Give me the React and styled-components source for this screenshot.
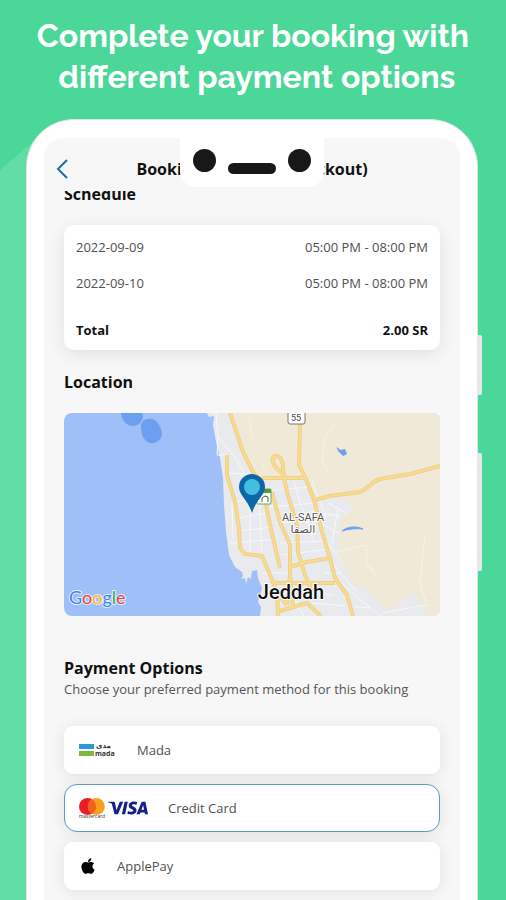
import React, { useState } from "react"
import styled, { createGlobalStyle } from "styled-components"
import { FaApple } from "react-icons/fa"
import { SiVisa } from "react-icons/si"

const GlobalStyle = createGlobalStyle`
  * {
    box-sizing: border-box;
  }
  body {
    margin: 0;
    font-family: "Open Sans", "Noto Sans", sans-serif;
    color: #111;
  }
`

const Page = styled.main`
  min-height: 100vh;
  display: flex;
  flex-direction: column;
  overflow: hidden;
  background: linear-gradient(to bottom right, #4bd798 50%, #62dda6 50%) 0 136px /
      40px 34px no-repeat,
    linear-gradient(#62dda6, #62dda6) 0 170px / 40px 100% no-repeat, #4bd798;
`

const Headline = styled.h1`
  margin: 0;
  padding: 15px 0 22px;
  font-family: Raleway, Lato, sans-serif;
  font-size: 32px;
  font-weight: 700;
  line-height: 41px;
  text-align: center;
  color: #fff;
`

const Phone = styled.div`
  position: relative;
  flex: 1;
  display: flex;
  margin: 0 28px 0 26px;
  padding: 18px 17px 0;
  border: 1px solid #d9e8e1;
  border-bottom: 0;
  border-radius: 48px 48px 0 0;
  background: #fff;
`

const SideButton = styled.span`
  position: absolute;
  left: 100%;
  top: ${({ $top }) => $top}px;
  width: 5px;
  height: ${({ $height }) => $height}px;
  border-radius: 0 2px 2px 0;
  background: #e6e9ea;
`

const Notch = styled.div`
  position: absolute;
  top: 18px;
  left: 50%;
  transform: translateX(-50%);
  width: 144px;
  height: 49px;
  padding: 11px 13px 0;
  display: flex;
  justify-content: space-between;
  border-radius: 0 0 16px 16px;
  background: #fff;
`

const Camera = styled.span`
  width: 23px;
  height: 23px;
  border-radius: 50%;
  background: #17181a;
`

const Speaker = styled.span`
  width: 48px;
  height: 11px;
  margin-top: 14px;
  border-radius: 6px;
  background: #17181a;
`

const Screen = styled.div`
  flex: 1;
  min-width: 0;
  display: flex;
  flex-direction: column;
  border-radius: 20px 20px 0 0;
  background: #f7f7f7;
`

const TopBar = styled.header`
  height: 53px;
  padding: 8px 11px 0;
  display: grid;
  grid-template-columns: 16px 1fr 16px;
  align-items: center;
`

const BackButton = styled.button`
  padding: 0;
  border: 0;
  background: none;
  display: flex;
  cursor: pointer;
`

const Title = styled.h2`
  margin: 0;
  font-size: 16px;
  font-weight: 700;
  line-height: 24px;
  text-align: center;
  white-space: nowrap;
`

const ScrollArea = styled.div`
  flex: 1;
  overflow: hidden;
  padding: 0 20px;
`

/* the list sits slightly scrolled under the top bar */
const Content = styled.div`
  margin-top: -9px;
  display: flex;
  flex-direction: column;
  padding-bottom: 10px;
`

const SectionTitle = styled.h3`
  margin: 0;
  font-size: 16px;
  font-weight: 700;
  line-height: 24px;
`

const Card = styled.div`
  margin: 19px 0 20px;
  padding: 4px 12px 3px;
  border-radius: 10px;
  background: #fff;
  box-shadow: 0 4px 18px rgba(0, 0, 0, 0.09);
`

const Schedule = styled.table`
  width: 100%;
  border-collapse: collapse;
  font-size: 13px;
  line-height: 18px;
  color: #505050;

  th,
  td {
    height: 36px;
    padding: 0;
    font-weight: 400;
    text-align: left;
  }
  td {
    text-align: right;
  }
  tfoot th,
  tfoot td {
    height: 46px;
    padding-top: 12px;
    font-weight: 700;
    color: #111;
  }
`

const MapBox = styled.div`
  height: 203px;
  margin: 19px 0 40px;
  border-radius: 8px;
  overflow: hidden;

  svg {
    display: block;
    width: 100%;
    height: 100%;
  }
`

const Hint = styled.p`
  margin: 0 0 28px;
  font-size: 13px;
  line-height: 18px;
  color: #555;
`

const Options = styled.div`
  display: flex;
  flex-direction: column;
  gap: 10px;
`

const Option = styled.label`
  height: 48px;
  padding: 0 14px;
  display: flex;
  align-items: center;
  gap: 20px;
  border: 1px solid ${({ $selected }) => ($selected ? "#5b9cc0" : "#fff")};
  border-radius: ${({ $selected }) => ($selected ? 13 : 9)}px;
  background: #fff;
  box-shadow: 0 2px 16px rgba(0, 0, 0, 0.09);
  font-size: 13px;
  line-height: 18px;
  color: #505050;
  cursor: pointer;

  input {
    appearance: none;
    position: absolute;
    margin: 0;
  }
`

const Logos = styled.span`
  display: flex;
  align-items: center;
  gap: 3px;
`

const MadaLogo = () => (
  <svg width="38" height="18" viewBox="0 0 38 18">
    <rect y="3" width="15" height="5" fill="#259bd7" />
    <rect y="10" width="15" height="5" fill="#84b740" />
    <text x="17" y="7" fontSize="7" fontWeight="700" fontFamily="DejaVu Sans" fill="#333">
      مدى
    </text>
    <text x="16" y="15" fontSize="7" fontWeight="700" fontFamily="Open Sans" fill="#333">
      mada
    </text>
  </svg>
)

const MastercardLogo = () => (
  <svg width="26" height="24" viewBox="0 0 26 24">
    <circle cx="8.5" cy="10.5" r="8.5" fill="#eb1c26" />
    <circle cx="17.3" cy="10.5" r="8.5" fill="#f99f1b" />
    <path d="M12.9 3.2a8.5 8.5 0 0 1 0 14.6a8.5 8.5 0 0 1 0-14.6z" fill="#f26122" />
    <text x="13" y="22" fontSize="5" textAnchor="middle" fontFamily="Open Sans" fill="#333">
      mastercard
    </text>
  </svg>
)

const roads = [
  "M166 0 171 15 179 39 189 59 198 69 204 102 209 125 216 155",
  "M163 42 163 62 171 89 175 115 176 135 181 141 198 143 206 162 213 179 214 203",
  "M198 65H241",
  "M219 59 223 79 233 112 234 139 241 162 248 179",
  "M236 9 235 52 241 64 250 87 258 119 266 145 271 165 283 182 289 203",
  "M251 87 266 83 296 79C306 75 308 68 316 66L346 61 376 53",
  "M208 79 216 109 226 132 226 162 223 192",
  "M226 154 243 149 266 145",
  "M208 170H271",
  "M213 199 229 194 243 190 257 203",
  "M223 192 213 180M229 194 226 162",
  "M219 59C220 50 217 43 212 43C207 43 208 51 213 56L221 62",
]

const streets =
  "M152 0 154 24 153 42 163 42M154 24 171 44 180 60M163 60 194 62M171 89 198 83M174 105 204 100M176 118 209 114M178 129 214 126M186 66 186 140M194 62 198 143M165 130 176 130M168 90 169 125M200 78 246 74M205 94 252 90M211 110 258 108M216 130 262 128M218 142 266 136M245 98 276 103M256 110 275 120M262 128 276 145M268 150 292 178M272 165 300 190M230 68 236 90 244 110 250 130M248 68 262 105M238 178 270 182M248 190 306 195M226 178 240 203M198 160 226 160M264 90 282 100M274 95 268 130M260 160 276 160M298 188 316 203M318 200 362 192"

const MapView = () => (
  <svg viewBox="0 0 376 203" preserveAspectRatio="xMidYMid slice">
    <rect width="376" height="203" fill="#9ebff8" />
    <path
      d="M143 0 145 4 150 3 149 12 152 29 156 45 159 65 160 92 162 119 165 142 171 154 178 159 179 163 177 166 181 165 182 171 184 164 187 166 188 158 193 157 194 165 198 175 194 189 197 194 196 203 376 203 376 0Z"
      fill="#e8eaed"
    />
    <path
      d="M166 0 171 15 189 59 198 65 241 64 250 86 265 84 280 86 290 95 276 105 273 139 283 159 293 175 302 174 313 189 326 199 338 188 349 180 356 192 366 203H376V0Z"
      fill="#f0e9d8"
    />
    <path d={streets} fill="none" stroke="#f6f7f9" strokeWidth="1" />
    <path
      d="M185 5 189 25M197 47 201 58M272 139 302 132 303 151 314 166M300 151 311 158M361 122 358 150 356 172 363 193M270 12 261 25 258 48 266 60"
      fill="none"
      stroke="#f7f2e6"
      strokeWidth="1"
    />
    <g fill="#6c9ff0">
      <path d="M57 0C58 9 64 13 69 13C74 13 79 8 79 3L78 0Z" />
      <path d="M77 13C77 7 83 5 88 6C94 7 97 15 98 20C98 27 92 31 86 30C79 28 77 20 77 13Z" />
      <path d="M272 34 277 37 281 36 283 41 279 43 275 39Z" />
      <path d="M278 118C284 113 293 113 299 116C292 115 285 116 278 118Z" stroke="#6c9ff0" />
    </g>
    <g fill="none" strokeLinejoin="round">
      {roads.map(d => (
        <path key={d} d={d} stroke="#f0d084" strokeWidth="4" />
      ))}
      {roads.map(d => (
        <path key={d} d={d} stroke="#f8da90" strokeWidth="2" />
      ))}
    </g>
    <rect x="224" y="-3" width="17" height="14" rx="2" fill="#fff" stroke="#777" />
    <text x="232" y="8" fontSize="9" textAnchor="middle" fontFamily="Roboto" fill="#444">
      55
    </text>
    <rect x="193" y="76" width="14" height="15" rx="1" fill="#fff" stroke="#68a866" />
    <path d="M193 76h14v4h-14z" fill="#4f9e3d" />
    <path d="M198 89v-4l3-2 3 1v5" fill="none" stroke="#555" />
    <g
      fontFamily="Roboto, DejaVu Sans, sans-serif"
      textAnchor="middle"
      stroke="#fff"
      strokeWidth="2"
      paintOrder="stroke"
      strokeLinejoin="round"
    >
      <text x="239" y="108" fontSize="11" fill="#555">
        AL-SAFA
      </text>
      <text x="239" y="120" fontSize="11" fill="#555">
        الصفا
      </text>
      <text x="227" y="186" fontSize="20" fontWeight="500" fill="#111">
        Jeddah
      </text>
      <text x="219" y="212" fontSize="14" fontWeight="500" fill="#111">
        جدة
      </text>
    </g>
    <path
      d="M188 61a13 13 0 0 1 13 13c0 8-9 13-13 26c-4-13-13-18-13-26a13 13 0 0 1 13-13z"
      fill="#0d66a6"
    />
    <circle cx="188" cy="74" r="8" fill="#41bfe3" />
    <text
      x="5"
      y="191"
      fontFamily="Lato, sans-serif"
      fontSize="18"
      stroke="#e4edfd"
      strokeWidth="2"
      paintOrder="stroke"
      strokeLinejoin="round"
    >
      <tspan fill="#4285f4">G</tspan>
      <tspan fill="#ea4335">o</tspan>
      <tspan fill="#fbbc05">o</tspan>
      <tspan fill="#4285f4">g</tspan>
      <tspan fill="#34a853">l</tspan>
      <tspan fill="#ea4335">e</tspan>
    </text>
  </svg>
)

const slots = [
  { date: "2022-09-09", time: "05:00 PM - 08:00 PM" },
  { date: "2022-09-10", time: "05:00 PM - 08:00 PM" },
]

const methods = [
  { id: "mada", label: "Mada", logo: <MadaLogo /> },
  {
    id: "card",
    label: "Credit Card",
    logo: (
      <>
        <MastercardLogo />
        <SiVisa size={40} color="#14218a" />
      </>
    ),
  },
  { id: "apple", label: "ApplePay", logo: <FaApple size={18} color="#000" /> },
]

const App = () => {
  const [selected, setSelected] = useState("card")

  return (
    <Page>
      <GlobalStyle />
      <Headline>
        Complete your booking with
        <br />
        &nbsp;different payment options
      </Headline>
      <Phone>
        <Screen>
          <TopBar>
            <BackButton aria-label="Back">
              <svg width="16" height="22" viewBox="0 0 16 22">
                <path d="M12 2 3 11l9 9" fill="none" stroke="#1b6fa6" strokeWidth="2" />
              </svg>
            </BackButton>
            <Title>Booking Payment (Checkout)</Title>
          </TopBar>
          <ScrollArea>
            <Content>
              <SectionTitle>Schedule</SectionTitle>
              <Card>
                <Schedule>
                  <tbody>
                    {slots.map(({ date, time }) => (
                      <tr key={date}>
                        <th scope="row">{date}</th>
                        <td>{time}</td>
                      </tr>
                    ))}
                  </tbody>
                  <tfoot>
                    <tr>
                      <th scope="row">Total</th>
                      <td>2.00 SR</td>
                    </tr>
                  </tfoot>
                </Schedule>
              </Card>
              <SectionTitle>Location</SectionTitle>
              <MapBox>
                <MapView />
              </MapBox>
              <SectionTitle>Payment Options</SectionTitle>
              <Hint>Choose your preferred payment method for this booking</Hint>
              <Options role="radiogroup" aria-label="Payment Options">
                {methods.map(({ id, label, logo }) => (
                  <Option key={id} $selected={id === selected}>
                    <input
                      type="radio"
                      name="method"
                      value={id}
                      checked={id === selected}
                      onChange={() => setSelected(id)}
                    />
                    <Logos>{logo}</Logos>
                    {label}
                  </Option>
                ))}
              </Options>
            </Content>
          </ScrollArea>
        </Screen>
        <Notch>
          <Camera />
          <Speaker />
          <Camera />
        </Notch>
        <SideButton $top={215} $height={60} />
        <SideButton $top={333} $height={118} />
      </Phone>
    </Page>
  )
}

export default App
